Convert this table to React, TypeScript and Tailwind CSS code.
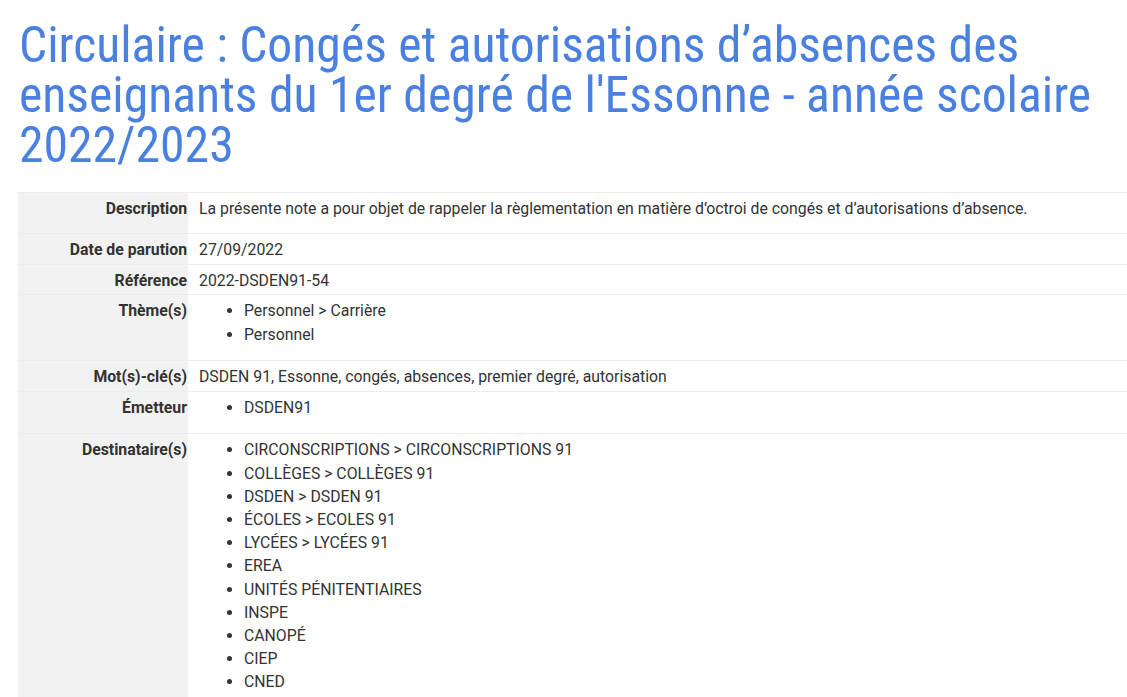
import React from 'react';

type Row = {
  label: string;
  text?: string;
  items?: string[];
  spaced?: boolean;
};

const rows: Row[] = [
  {
    label: 'Description',
    text: 'La présente note a pour objet de rappeler la règlementation en matière d’octroi de congés et d’autorisations d’absence.',
    spaced: true,
  },
  { label: 'Date de parution', text: '27/09/2022' },
  { label: 'Référence', text: '2022-DSDEN91-54' },
  { label: 'Thème(s)', items: ['Personnel > Carrière', 'Personnel'] },
  { label: 'Mot(s)-clé(s)', text: 'DSDEN 91, Essonne, congés, absences, premier degré, autorisation' },
  { label: 'Émetteur', items: ['DSDEN91'] },
  {
    label: 'Destinataire(s)',
    items: [
      'CIRCONSCRIPTIONS > CIRCONSCRIPTIONS 91',
      'COLLÈGES > COLLÈGES 91',
      'DSDEN > DSDEN 91',
      'ÉCOLES > ECOLES 91',
      'LYCÉES > LYCÉES 91',
      'EREA',
      'UNITÉS PÉNITENTIAIRES',
      'INSPE',
      'CANOPÉ',
      'CIEP',
      'CNED',
    ],
  },
];

export default function App() {
  return (
    <div className="bg-white min-h-screen pl-[18px] font-['Roboto',sans-serif] text-[#333]">
      {/* Title */}
      <h1 className="pt-[20px] pl-px pr-4 font-['Roboto_Condensed','Roboto',sans-serif] text-[49.7px] leading-[50px] font-normal text-[#4a80e0]">
        Circulaire : Congés et autorisations d’absences des enseignants du 1er degré de l'Essonne - année scolaire 2022/2023
      </h1>

      {/* Metadata table */}
      <div className="mt-[22px] border-t border-[#ececec]">
        {rows.map((row) => (
          <div key={row.label} className="flex border-b border-[#ececec] text-[15.8px] leading-[23.2px]">
            <div className="w-[170px] shrink-0 bg-[#f2f2f2] pt-1 pr-px text-right font-bold">
              {row.label}
            </div>
            <div className="flex-1 pl-[11px] pt-1 pb-[2.4px]">
              {row.text && <p className={row.spaced ? 'mb-[10.6px]' : ''}>{row.text}</p>}
              {row.items && (
                <ul className="list-disc pl-[45px] mb-[12px]">
                  {row.items.map((item) => (
                    <li key={item}>{item}</li>
                  ))}
                </ul>
              )}
            </div>
          </div>
        ))}
      </div>
    </div>
  );
}
